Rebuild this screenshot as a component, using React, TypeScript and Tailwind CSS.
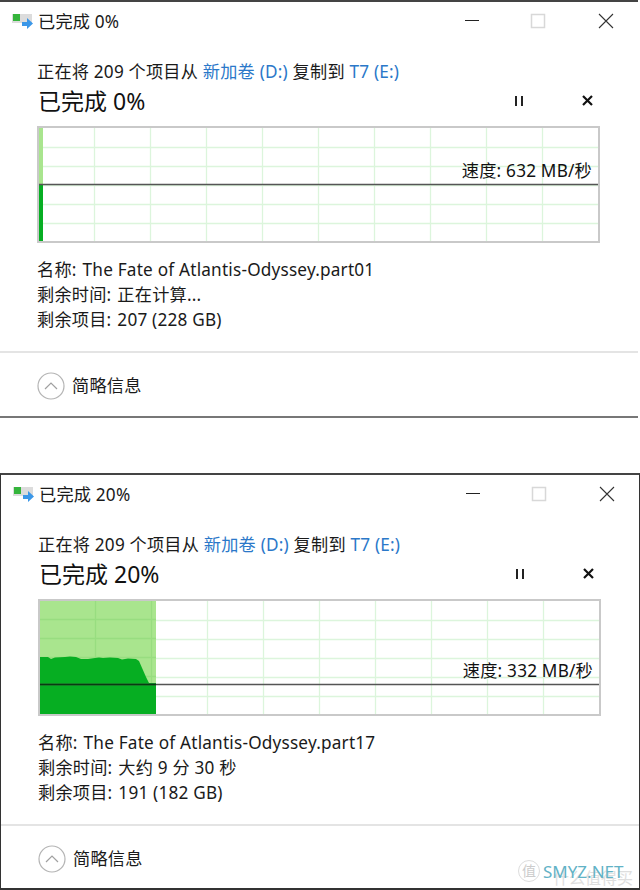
const font = "[font-family:'Noto_Sans','Noto_Sans_CJK_SC',sans-serif]";

const gridX = [57, 113, 169, 225, 281, 337, 393, 449, 505];
const gridY = [21, 40, 59, 78, 97];

function CopyIcon() {
  return (
    <svg width="22" height="16" viewBox="0 0 22 16" className="shrink-0">
      <rect x="0" y="1" width="20" height="9" fill="#dcdcdc" />
      <rect x="1" y="1" width="7" height="7" fill="#35b53c" />
      <path d="M10 9h5V5l6 5.500-6 5.500V13h-5z" fill="#3b97e8" />
    </svg>
  );
}

function Chart({ mode, lineY }: { mode: "start" | "twenty"; lineY: number }) {
  return (
    <svg width="563" height="117" viewBox="0 0 563 117" className="block">
      <rect x="1" y="1" width="561" height="115" fill="#fff" stroke="#c9c9c9" strokeWidth="2" />
      {gridX.map((x) => (
        <line key={x} x1={x + 0.5} y1="2" x2={x + 0.5} y2="115" stroke="#dcf5dc" strokeWidth="1.300" />
      ))}
      {gridY.map((y) => (
        <line key={y} x1="2" y1={y + 0.5} x2="561" y2={y + 0.5} stroke="#dcf5dc" strokeWidth="1.300" />
      ))}
      {mode === "start" ? (
        <>
          <rect x="2" y="2" width="4" height="56" fill="#a9e58e" />
          <rect x="2" y="58" width="4" height="57" fill="#06ae22" />
        </>
      ) : (
        <>
          <rect x="2" y="2" width="116" height="113" fill="#a9e58e" />
          {[57.5, 113.5].map((x) => (
            <line key={x} x1={x} y1="2" x2={x} y2="115" stroke="#98dd80" strokeWidth="1.300" />
          ))}
          {[20.5, 39.5, 58.5, 77.5, 96.5].map((y) => (
            <line key={y} x1="2" y1={y} x2="118" y2={y} stroke="#98dd80" strokeWidth="1.300" />
          ))}
          <path
            d="M2 58 L10 58 L13 60 L17 58.500 L27 58 L32 57.500 L38 58 L43 60 L50 60 L57 59 L61 58.500 L65 59 L72 58.500 L80 59 L84 60.500 L90 59.500 L98 60 L101 62 L108 78 L111 84 L118 84 V115 H2 Z"
            fill="#06ae22"
          />
        </>
      )}
      <line x1="2" y1={lineY} x2="561" y2={lineY} stroke="#555" strokeWidth="1.500" />
      {mode === "twenty" && <line x1="2" y1={lineY} x2="118" y2={lineY} stroke="#0a3a12" strokeWidth="1.500" />}
    </svg>
  );
}

type DialogProps = {
  title: string;
  speed: string;
  file: string;
  remaining: string;
  items: string;
  mode: "start" | "twenty";
  second?: boolean;
};

function Dialog({ title, speed, file, remaining, items, mode, second }: DialogProps) {
  return (
    <div
      className={`bg-white border-t-2 border-[#444] text-[17.2px] leading-[25px] tracking-[0.2px] text-[#1a1a1a] ${
        second
          ? "h-[417px] border-x border-x-[#333] border-b-2 border-b-[#333]"
          : "h-[418px] border-b-2 border-b-[#777] mr-[2px]"
      }`}
    >
      <div className="flex h-[38px] items-center pl-[12px] pr-[23px]">
        <CopyIcon />
        <span className="ml-[4px]">{title}</span>
        <svg width="150" height="16" viewBox="0 0 150 16" className="ml-auto">
          <line x1="0" y1="7.500" x2="14" y2="7.500" stroke="#222" />
          <rect x="66.500" y="1.500" width="13" height="13" fill="none" stroke="#d8d8d8" strokeWidth="1.500" />
          <path d="M134 1l14 14M148 1l-14 14" stroke="#333" strokeWidth="1.100" fill="none" />
        </svg>
      </div>
      <div className="pl-[37px] pr-[38px] pt-[19px]">
        <p className="whitespace-pre">
          正在将 209 个项目从 <span className="text-[#2b78c9]">新加卷 (D:)</span> 复制到{" "}
          <span className="text-[#2b78c9]">T7 (E:)</span>
        </p>
        <div className="flex h-[33px] items-center justify-between pr-[7px]">
          <h2 className="pl-[1px] pt-[2px] text-[23px] font-normal tracking-normal text-[#111]">{title}</h2>
          <div className="flex items-center gap-[58px]">
            <svg width="10" height="10" viewBox="0 0 10 10">
              <path d="M1 0v10h2V0zM7 0v10h2V0z" fill="#222" />
            </svg>
            <svg width="11" height="11" viewBox="0 0 11 11">
              <path d="M1 1l9 9M10 1l-9 9" stroke="#111" strokeWidth="2.200" fill="none" />
            </svg>
          </div>
        </div>
        <div className="relative mt-[9px]">
          <Chart mode={mode} lineY={second ? 85.5 : 58.5} />
          <span className={`absolute right-[8px] text-[#111] ${second ? "top-[59px]" : "top-[32px]"}`}>{speed}</span>
        </div>
        <dl className="mt-[14px]">
          <div className="flex gap-[6px]">
            <dt>名称:</dt>
            <dd>{file}</dd>
          </div>
          <div className="flex gap-[6px]">
            <dt>剩余时间:</dt>
            <dd>{remaining}</dd>
          </div>
          <div className="flex gap-[6px]">
            <dt>剩余项目:</dt>
            <dd>{items}</dd>
          </div>
        </dl>
      </div>
      <div className="mt-[19px] flex h-[67px] items-center border-t-2 border-[#e4e4e4] pl-[37px]">
        <svg width="28" height="28" viewBox="0 0 28 28" className="shrink-0">
          <circle cx="14" cy="14" r="13" fill="none" stroke="#b4b4b4" strokeWidth="1.200" />
          <path d="M8 17l6-6 6 6" fill="none" stroke="#a0a0a0" strokeWidth="1.200" />
        </svg>
        <span className="ml-[7px]">简略信息</span>
      </div>
    </div>
  );
}

export default function App() {
  return (
    <div className={`relative h-[890px] w-[640px] overflow-hidden bg-white ${font}`}>
      <Dialog
        title="已完成 0%"
        speed="速度: 632 MB/秒"
        file="The Fate of Atlantis-Odyssey.part01"
        remaining="正在计算..."
        items="207 (228 GB)"
        mode="start"
      />
      <div className="h-[55px]" />
      <Dialog
        title="已完成 20%"
        speed="速度: 332 MB/秒"
        file="The Fate of Atlantis-Odyssey.part17"
        remaining="大约 9 分 30 秒"
        items="191 (182 GB)"
        mode="twenty"
        second
      />
      <div className="absolute right-[7px] top-[870px] text-[16px] leading-none text-[#dedede]">什么值得买</div>
      <div className="absolute left-[518px] top-[860px] flex items-center">
        <span className="flex h-[22px] w-[22px] items-center justify-center rounded-full border border-[#ddd] text-[14px] leading-none text-[#ccc]">
          值
        </span>
        <span className="ml-[3px] text-[17px] leading-none text-[#62b2c6]">SMYZ.NET</span>
      </div>
    </div>
  );
}
